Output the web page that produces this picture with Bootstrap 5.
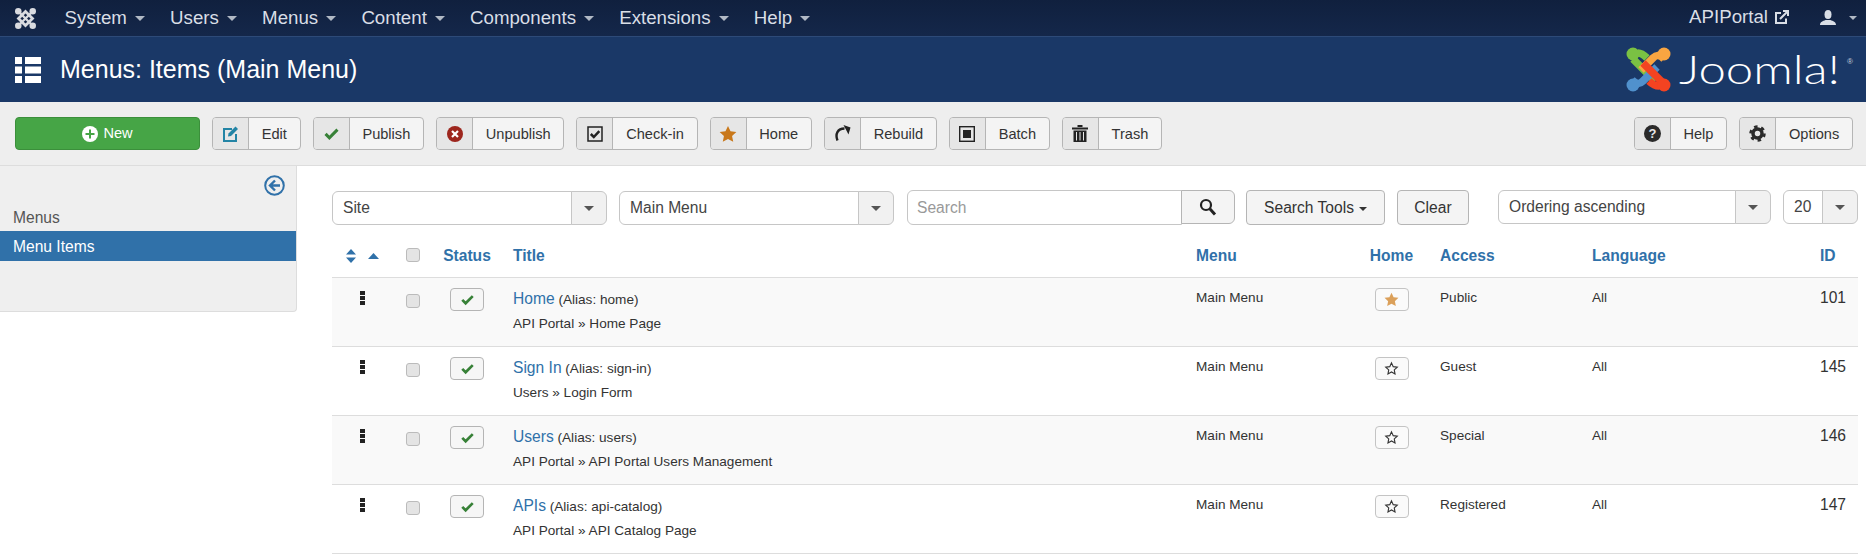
<!DOCTYPE html>
<html lang="en">
<head>
  <meta charset="UTF-8">
  <meta name="viewport" content="width=device-width, initial-scale=1.0">
  <title>Menus: Items (Main Menu)</title>
  <link href="https://cdn.jsdelivr.net/npm/bootstrap@5.3.0/dist/css/bootstrap.min.css" rel="stylesheet">
  <style>
    body { font-family: "Liberation Sans", Arial, sans-serif; font-size: 15.6px; color: #333; background: #fff; overflow: hidden; }
    svg { display: block; }

    /* top bar */
    .top-bar { height: 37px; padding: 0 9px 0 15px; background: linear-gradient(#10203e, #14274a); border-bottom: 1px solid #2d4a78; flex-wrap: nowrap; --bs-navbar-nav-link-padding-x: 12.6px; }
    .top-bar .nav-link { color: #d9dee6; font-size: 18.7px; line-height: 22px; padding-top: 6px; padding-bottom: 7px; white-space: nowrap; }
    .top-bar .dropdown-toggle::after { margin-left: 8px; vertical-align: 3px; border-top-width: 5px; border-left-width: 5px; border-right-width: 5px; opacity: .8; }
    .brand-mark { width: 21px; height: 21px; margin-right: 16px; color: #d9dbe0; }
    .site-link { gap: 7px; padding-right: 23px !important; }
    .user-link { display: flex; align-items: center; height: 36px; padding: 0 0 0 8px !important; }
    .user-link::after { margin-left: 13px !important; vertical-align: 0 !important; border-top-width: 4px !important; border-left-width: 4px !important; border-right-width: 4px !important; }

    /* title bar */
    .title-bar { height: 65px; padding: 0 13px 0 15px; background: #1a3867; color: #fff; }
    .title-bar h1 { font-size: 25px; font-weight: 400; margin: 0 0 1px 19px; }
    .joomla-logo { gap: 8px; }
    .joomla-word { display: inline-block; width: 130px; margin-right: 30px; font-family: Lato, "Open Sans", sans-serif; font-weight: 300; font-size: 39px; line-height: 45px; color: #fff; transform: scaleX(1.26); transform-origin: left center; white-space: nowrap; }
    .joomla-reg { font-size: 8px; color: #c8d0dc; align-self: flex-start; margin-top: 9px; }

    /* toolbar */
    .tool-bar { height: 64px; padding: 0 13px 0 15px; gap: 12px; background: #eee; border-bottom: 1px solid #ddd; }
    .tool-btn { display: inline-flex; align-items: stretch; height: 33px; padding: 0; font-size: 14.6px; line-height: 31px; color: #333; background: #f4f4f4; border: 1px solid #b5b5b5; border-radius: 4px; overflow: hidden; --bs-btn-hover-bg: #e6e6e6; }
    .tool-ico { display: flex; align-items: center; justify-content: center; width: 36px; background: #e6e6e6; border-right: 1px solid #b5b5b5; }
    .tool-lbl { padding: 1px 12.75px 0; }
    .new-btn { display: inline-flex; align-items: center; justify-content: center; gap: 5px; width: 185px; height: 33px; padding: 0; font-size: 14.6px; color: #fff; background: #46a546; border: 1px solid #3b8f3b; border-radius: 4px; }

    /* side menu */
    .side-menu { flex: 0 0 297px; height: 146px; background: #efefef; border-right: 1px solid #ddd; border-bottom: 1px solid #ddd; border-bottom-right-radius: 4px; }
    .side-toggle { padding: 9px 11px 0 0; height: 41px; }
    .side-head { color: #555; padding: 0 13px; line-height: 22px; height: 24px; font-size: 15.6px; }
    .side-item .list-group-item { background: #3071a9; color: #fff; border: 0; border-radius: 0; height: 30px; line-height: 31px; padding: 0 13px; font-size: 15.6px; }

    /* filters */
    .list-pane { width: 1526px; margin-left: 35px; }
    .filter-row { padding-top: 24px; height: 71px; }
    .pick-box { height: 34px; flex-wrap: nowrap; font-size: 15.6px; }
    .pick-box .form-control { padding: 0 10px; line-height: 32px; color: #444; border-color: #c6c6c6; font-size: 15.6px; min-width: 0; }
    .pick-box .input-group-text { width: 36px; padding: 0; justify-content: center; background: #f1f1f1; border-color: #c6c6c6; }
    .pick-site { width: 275px; margin: 1px 12px 0 0; }
    .pick-menu { width: 275px; margin: 1px 13px 0 0; }
    .pick-sort { width: 273px; margin-left: 29px; margin-right: 12px; }
    .pick-limit { width: 75px; }
    .mini-caret { width: 0; height: 0; border-left: 5px solid transparent; border-right: 5px solid transparent; border-top: 5px solid #555; }
    .search-box { width: 328px; height: 35px; flex-wrap: nowrap; margin-right: 11px; }
    .search-box .form-control { height: 35px; padding: 0 9px; font-size: 15.6px; border-color: #c6c6c6; }
    .search-box .form-control::placeholder { color: #999; }
    .search-box .btn { width: 54px; height: 34px; padding: 0; display: flex; align-items: center; justify-content: center; background: #f4f4f4; border: 1px solid #b5b5b5; }
    .plain-btn { height: 35px; padding: 0; font-size: 15.6px; color: #333; background: #f4f4f4; border: 1px solid #b5b5b5; border-radius: 4px; }
    .tools-btn { width: 139px; margin-right: 12px; }
    .tools-btn::after { margin-left: 5px; vertical-align: 2px; }
    .clear-btn { width: 72px; }

    /* table */
    .item-table { table-layout: fixed; width: 1526px; margin: 0; font-size: 13.6px; --bs-table-striped-bg: #f9f9f9; --bs-table-striped-color: #333; --bs-table-border-color: #ddd; --bs-table-color: #333; }
    .item-table th { height: 40px; padding: 0 0 2px 9px; color: #3071a9; font-size: 15.6px; font-weight: 700; vertical-align: middle; border-bottom: 1px solid #ddd; }
    .item-table td { height: 69px; padding: 10px 0 0 9px; line-height: 20px; vertical-align: top; border-bottom: 1px solid #ddd; }
    .item-table a { color: #3071a9; text-decoration: none; font-size: 15.6px; line-height: 22px; }
    .item-table .mid-col { padding-left: 0; text-align: center; }
    .cw-ord { width: 64px; } .cw-chk { width: 34px; } .cw-sta { width: 74px; } .cw-tit { width: 683px; } .cw-men { width: 165px; }
    .cw-hom { width: 79px; } .cw-acc { width: 152px; } .cw-lan { width: 228px; } .cw-id { width: 47px; }
    .sort-icons { gap: 12px; padding-left: 14px; }
    .drag-dots { display: block; width: 5px; height: 14px; margin: 3px 0 0 28px; background: repeating-linear-gradient(#222 0 4px, transparent 4px 5px); }
    .item-table .form-check-input { width: 14px; height: 14px; margin: 6px 0 0; background-color: #e4e4e4; border: 1px solid #bbb; border-radius: 3px; }
    .item-table th .form-check-input { margin: 4px 0 0; }
    .state-btn { display: inline-flex; align-items: center; justify-content: center; width: 34px; height: 23px; padding: 0; background: #f6f6f6; border: 1px solid #b5b5b5; border-radius: 4px; }
    .home-btn { background: #fafafa; border-color: #c4c4c4; }
    .alias-note { font-size: 13.6px; }
    .path-note { margin-top: 4px; }
    .id-cell { font-size: 15.6px; }
  </style>
</head>
<body>
  <!-- icon sprites -->
  <svg width="0" height="0" class="position-absolute">
    <symbol id="ico-check" viewBox="0 0 20 20"><path d="M3 10.5l4.5 4.5L17 5.5" fill="none" stroke="currentColor" stroke-width="3.6"/></symbol>
    <symbol id="ico-star" viewBox="0 0 20 20"><path d="M10 1l2.8 6 6.5.8-4.8 4.4 1.3 6.5L10 15.500l-5.800 3.200 1.300-6.500L.7 7.800l6.500-.8z" fill="currentColor"/></symbol>
    <symbol id="ico-star-o" viewBox="0 0 20 20"><path d="M10 2.500l2.300 5 5.400.7-4 3.700 1 5.400L10 14.600l-4.700 2.700 1-5.400-4-3.700 5.400-.7z" fill="none" stroke="currentColor" stroke-width="1.500"/></symbol>
    <symbol id="ico-joomla" viewBox="0 0 45 45">
      <g fill="none" stroke="currentColor">
        <path d="M22.500 7.500L37.500 22.500 22.500 37.500 7.500 22.500z" stroke-width="6"/>
        <path d="M7 7l31 31M38 7L7 38" stroke-width="5"/>
      </g>
      <g fill="currentColor"><circle cx="7" cy="7" r="7"/><circle cx="38" cy="7" r="7"/><circle cx="7" cy="38" r="7"/><circle cx="38" cy="38" r="7"/></g>
    </symbol>
  </svg>

  <nav class="navbar navbar-expand navbar-dark top-bar">
    <svg class="brand-mark"><use href="#ico-joomla"/></svg>
    <ul class="navbar-nav">
      <li class="nav-item"><a class="nav-link dropdown-toggle" href="#">System</a></li>
      <li class="nav-item"><a class="nav-link dropdown-toggle" href="#">Users</a></li>
      <li class="nav-item"><a class="nav-link dropdown-toggle" href="#">Menus</a></li>
      <li class="nav-item"><a class="nav-link dropdown-toggle" href="#">Content</a></li>
      <li class="nav-item"><a class="nav-link dropdown-toggle" href="#">Components</a></li>
      <li class="nav-item"><a class="nav-link dropdown-toggle" href="#">Extensions</a></li>
      <li class="nav-item"><a class="nav-link dropdown-toggle" href="#">Help</a></li>
    </ul>
    <ul class="navbar-nav ms-auto">
      <li class="nav-item">
        <a class="nav-link d-flex align-items-center site-link" href="#">APIPortal
          <svg width="14" height="14" viewBox="0 0 14 14" fill="none" stroke="currentColor" stroke-width="2"><path d="M11 8.500V13H1V3h5"/><path d="M5 9l7-7M8 1h5v5" /></svg>
        </a>
      </li>
      <li class="nav-item">
        <a class="nav-link dropdown-toggle user-link" href="#">
          <svg width="16" height="16" viewBox="0 0 16 16" fill="currentColor"><ellipse cx="8" cy="4.500" rx="3.500" ry="4.500"/><path d="M0 15c0-3 3-4 5.500-5h5c2.500 1 5.500 2 5.500 5z"/></svg>
        </a>
      </li>
    </ul>
  </nav>

  <header class="d-flex align-items-center justify-content-between title-bar">
    <div class="d-flex align-items-center">
      <svg width="26" height="26" viewBox="0 0 26 26" fill="#fff"><path d="M0 0h7v7H0zM10 0h16v7H10zM0 9.500h7v7H0zM10 9.500h16v7H10zM0 19h7v7H0zM10 19h16v7H10z"/></svg>
      <h1>Menus: Items (Main Menu)</h1>
    </div>
    <div class="d-flex align-items-center joomla-logo">
      <svg width="45" height="45" viewBox="0 0 45 45">
        <g fill="none" stroke-width="7.500">
          <path d="M7 12C12 17 22 27 29 34" stroke="#7ac143"/>
          <path d="M12 6c4 0 7 3 9 5" stroke="#7ac143"/>
          <path d="M38 12C33 7 30 8 27 11L15 23" stroke="#f9a541"/>
          <path d="M33 6v5" stroke="#f9a541"/>
          <path d="M6 33c5 5 8 4 11 1l14-14" stroke="#5091cd"/>
          <path d="M17 16l19 19" stroke="#f44321"/>
          <path d="M33 39c-4 0-7-2-10-5" stroke="#f44321"/>
        </g>
        <circle cx="7" cy="7" r="6.500" fill="#7ac143"/><circle cx="38" cy="7" r="6.500" fill="#f9a541"/><circle cx="7" cy="38" r="6.500" fill="#5091cd"/><circle cx="38" cy="38" r="6.500" fill="#f44321"/>
      </svg>
      <span class="joomla-word">Joomla!</span><span class="joomla-reg">®</span>
    </div>
  </header>

  <div class="d-flex align-items-center tool-bar">
    <button class="btn new-btn" type="button">
      <svg width="16" height="16" viewBox="0 0 16 16"><circle cx="8" cy="8" r="8" fill="#fff"/><path d="M8 3.500v9M3.500 8h9" stroke="#46a546" stroke-width="2"/></svg>New
    </button>
    <button class="btn tool-btn" type="button"><span class="tool-ico">
      <svg width="18" height="18" viewBox="0 0 18 18" fill="none" stroke="#2384a5" stroke-width="2"><path d="M10 4H2v12h12V9"/><path d="M6.500 8.500L13.500 1.500l2.500 2.500-7 7-3 .5z" fill="#2384a5" stroke="none"/></svg>
    </span><span class="tool-lbl">Edit</span></button>
    <button class="btn tool-btn" type="button"><span class="tool-ico"><svg width="17" height="17" color="#378137"><use href="#ico-check"/></svg></span><span class="tool-lbl">Publish</span></button>
    <button class="btn tool-btn" type="button"><span class="tool-ico">
      <svg width="16" height="16" viewBox="0 0 16 16"><circle cx="8" cy="8" r="8" fill="#9d261d"/><path d="M5 5l6 6M11 5l-6 6" stroke="#fff" stroke-width="2.200"/></svg>
    </span><span class="tool-lbl">Unpublish</span></button>
    <button class="btn tool-btn" type="button"><span class="tool-ico">
      <svg width="16" height="16" viewBox="0 0 16 16" fill="none" stroke="#222"><rect x="1" y="1" width="14" height="14" stroke-width="1.500"/><path d="M3.800 8l3 3 5.500-5.800" stroke-width="2.500"/></svg>
    </span><span class="tool-lbl">Check-in</span></button>
    <button class="btn tool-btn" type="button"><span class="tool-ico"><svg width="18" height="18" color="#c9781a"><use href="#ico-star"/></svg></span><span class="tool-lbl">Home</span></button>
    <button class="btn tool-btn" type="button"><span class="tool-ico">
      <svg width="17" height="17" viewBox="0 0 17 17" fill="none" stroke="#222" stroke-width="2.400"><path d="M3.500 15.500C1 9 3.500 3.500 10.500 3.500"/><path d="M9.500 0l7 2.500-2 7z" fill="#222" stroke="none"/></svg>
    </span><span class="tool-lbl">Rebuild</span></button>
    <button class="btn tool-btn" type="button"><span class="tool-ico">
      <svg width="16" height="16" viewBox="0 0 16 16"><rect x=".7" y=".7" width="14.600" height="14.600" fill="none" stroke="#222" stroke-width="1.400"/><rect x="4" y="4" width="8" height="8" fill="#222"/></svg>
    </span><span class="tool-lbl">Batch</span></button>
    <button class="btn tool-btn" type="button"><span class="tool-ico">
      <svg width="16" height="17" viewBox="0 0 16 17" fill="#222"><path d="M0 2.500h16v2H0zM5.500 0h5v2h-5zM1.500 5.500h13V17h-13z"/><path d="M4.500 7v8.500M8 7v8.500M11.500 7v8.500" stroke="#e6e6e6"/></svg>
    </span><span class="tool-lbl">Trash</span></button>
    <button class="btn tool-btn ms-auto" type="button"><span class="tool-ico">
      <svg width="17" height="17" viewBox="0 0 17 17"><circle cx="8.500" cy="8.500" r="8.500" fill="#2a2a2a"/><text x="8.500" y="13" text-anchor="middle" fill="#e6e6e6" font-family="Liberation Sans" font-weight="700" font-size="13">?</text></svg>
    </span><span class="tool-lbl">Help</span></button>
    <button class="btn tool-btn" type="button"><span class="tool-ico">
      <svg width="17" height="17" viewBox="0 0 17 17" fill="none" stroke="#2a2a2a"><circle cx="8.500" cy="8.500" r="4.500" stroke-width="3.500"/><circle cx="8.500" cy="8.500" r="7" stroke-width="2.500" stroke-dasharray="3.500 3.830"/></svg>
    </span><span class="tool-lbl">Options</span></button>
  </div>

  <div class="d-flex">
    <aside class="side-menu">
      <div class="d-flex justify-content-end side-toggle">
        <svg width="21" height="21" viewBox="0 0 21 21" fill="none" stroke="#3071a9" stroke-width="2"><circle cx="10.500" cy="10.500" r="9.300"/><path d="M11 5.500l-5 5 5 5M6 10.500h10" stroke-width="2.400"/></svg>
      </div>
      <div class="side-head">Menus</div>
      <div class="list-group side-item"><a class="list-group-item" href="#">Menu Items</a></div>
    </aside>

    <main class="list-pane">
      <div class="d-flex align-items-start filter-row">
        <div class="input-group pick-box pick-site"><span class="form-control">Site</span><span class="input-group-text"><i class="mini-caret"></i></span></div>
        <div class="input-group pick-box pick-menu"><span class="form-control">Main Menu</span><span class="input-group-text"><i class="mini-caret"></i></span></div>
        <div class="input-group search-box">
          <input class="form-control" type="text" placeholder="Search">
          <button class="btn" type="button" aria-label="Search">
            <svg width="18" height="18" viewBox="0 0 18 18" fill="none" stroke="#222"><circle cx="7" cy="7" r="5" stroke-width="2.200"/><path d="M10.800 10.800L16 16.500" stroke-width="3"/></svg>
          </button>
        </div>
        <button class="btn plain-btn tools-btn dropdown-toggle" type="button">Search Tools</button>
        <button class="btn plain-btn clear-btn" type="button">Clear</button>
        <div class="input-group pick-box pick-sort"><span class="form-control">Ordering ascending</span><span class="input-group-text"><i class="mini-caret"></i></span></div>
        <div class="input-group pick-box pick-limit"><span class="form-control">20</span><span class="input-group-text"><i class="mini-caret"></i></span></div>
      </div>

      <table class="table table-striped item-table">
        <colgroup>
          <col class="cw-ord"><col class="cw-chk"><col class="cw-sta"><col class="cw-tit"><col class="cw-men"><col class="cw-hom"><col class="cw-acc"><col class="cw-lan"><col class="cw-id">
        </colgroup>
        <thead>
          <tr>
            <th class="mid-col">
              <div class="d-flex align-items-center sort-icons">
                <svg width="10" height="14" viewBox="0 0 10 14" fill="#3071a9"><path d="M5 0l5 5.500H0zM5 14L0 8.500h10z"/></svg>
                <svg width="11" height="6" viewBox="0 0 11 6" fill="#3071a9"><path d="M5.500 0L11 6H0z"/></svg>
              </div>
            </th>
            <th class="mid-col"><input class="form-check-input" type="checkbox"></th>
            <th class="mid-col">Status</th>
            <th>Title</th>
            <th>Menu</th>
            <th class="mid-col">Home</th>
            <th>Access</th>
            <th>Language</th>
            <th>ID</th>
          </tr>
        </thead>
        <tbody>
          <tr>
            <td class="mid-col"><span class="drag-dots"></span></td>
            <td class="mid-col"><input class="form-check-input" type="checkbox"></td>
            <td class="mid-col"><button class="btn state-btn" type="button"><svg width="15" height="15" color="#378137"><use href="#ico-check"/></svg></button></td>
            <td><a href="#">Home</a> <span class="alias-note">(Alias: home)</span><div class="path-note">API Portal » Home Page</div></td>
            <td>Main Menu</td>
            <td class="mid-col"><button class="btn state-btn home-btn" type="button"><svg width="15" height="15" color="#dba05a"><use href="#ico-star"/></svg></button></td>
            <td>Public</td>
            <td>All</td>
            <td class="id-cell">101</td>
          </tr>
          <tr>
            <td class="mid-col"><span class="drag-dots"></span></td>
            <td class="mid-col"><input class="form-check-input" type="checkbox"></td>
            <td class="mid-col"><button class="btn state-btn" type="button"><svg width="15" height="15" color="#378137"><use href="#ico-check"/></svg></button></td>
            <td><a href="#">Sign In</a> <span class="alias-note">(Alias: sign-in)</span><div class="path-note">Users » Login Form</div></td>
            <td>Main Menu</td>
            <td class="mid-col"><button class="btn state-btn home-btn" type="button"><svg width="15" height="15" color="#333"><use href="#ico-star-o"/></svg></button></td>
            <td>Guest</td>
            <td>All</td>
            <td class="id-cell">145</td>
          </tr>
          <tr>
            <td class="mid-col"><span class="drag-dots"></span></td>
            <td class="mid-col"><input class="form-check-input" type="checkbox"></td>
            <td class="mid-col"><button class="btn state-btn" type="button"><svg width="15" height="15" color="#378137"><use href="#ico-check"/></svg></button></td>
            <td><a href="#">Users</a> <span class="alias-note">(Alias: users)</span><div class="path-note">API Portal » API Portal Users Management</div></td>
            <td>Main Menu</td>
            <td class="mid-col"><button class="btn state-btn home-btn" type="button"><svg width="15" height="15" color="#333"><use href="#ico-star-o"/></svg></button></td>
            <td>Special</td>
            <td>All</td>
            <td class="id-cell">146</td>
          </tr>
          <tr>
            <td class="mid-col"><span class="drag-dots"></span></td>
            <td class="mid-col"><input class="form-check-input" type="checkbox"></td>
            <td class="mid-col"><button class="btn state-btn" type="button"><svg width="15" height="15" color="#378137"><use href="#ico-check"/></svg></button></td>
            <td><a href="#">APIs</a> <span class="alias-note">(Alias: api-catalog)</span><div class="path-note">API Portal » API Catalog Page</div></td>
            <td>Main Menu</td>
            <td class="mid-col"><button class="btn state-btn home-btn" type="button"><svg width="15" height="15" color="#333"><use href="#ico-star-o"/></svg></button></td>
            <td>Registered</td>
            <td>All</td>
            <td class="id-cell">147</td>
          </tr>
        </tbody>
      </table>
    </main>
  </div>

  <script src="https://cdn.jsdelivr.net/npm/bootstrap@5.3.0/dist/js/bootstrap.bundle.min.js"></script>
</body>
</html>
